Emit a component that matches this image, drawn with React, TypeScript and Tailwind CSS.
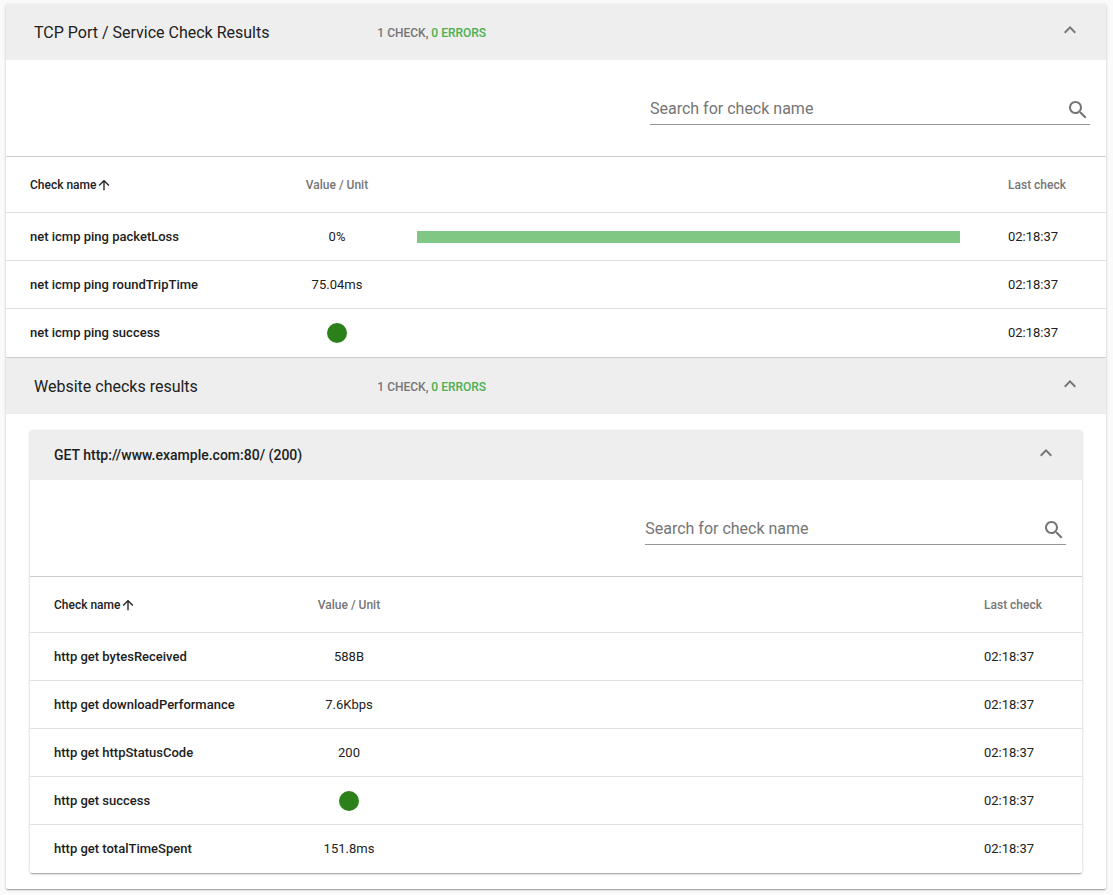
import React, { useState } from 'react';
import clsx from 'clsx';

type CheckRow = {
  name: string;
  value?: string;
  ok?: boolean;
  bar?: number;
  lastCheck: string;
};

const TCP_ROWS: CheckRow[] = [
  { name: 'net icmp ping packetLoss', value: '0%', bar: 100, lastCheck: '02:18:37' },
  { name: 'net icmp ping roundTripTime', value: '75.04ms', lastCheck: '02:18:37' },
  { name: 'net icmp ping success', ok: true, lastCheck: '02:18:37' },
];

const HTTP_ROWS: CheckRow[] = [
  { name: 'http get bytesReceived', value: '588B', lastCheck: '02:18:37' },
  { name: 'http get downloadPerformance', value: '7.6Kbps', lastCheck: '02:18:37' },
  { name: 'http get httpStatusCode', value: '200', lastCheck: '02:18:37' },
  { name: 'http get success', ok: true, lastCheck: '02:18:37' },
  { name: 'http get totalTimeSpent', value: '151.8ms', lastCheck: '02:18:37' },
];

const CARD =
  'rounded-xs bg-white shadow-[0_1px_3px_rgba(0,0,0,0.2),0_1px_1px_rgba(0,0,0,0.14),0_2px_1px_-1px_rgba(0,0,0,0.12)]';

const ChevronIcon: React.FC<{ open: boolean }> = ({ open }) => (
  <svg viewBox="0 0 24 24" className={clsx('size-6 fill-[#757575]', !open && 'rotate-180')} aria-hidden="true">
    <path d="M12 8l-6 6 1.41 1.41L12 10.83l4.59 4.58L18 14z" />
  </svg>
);

const SearchIcon: React.FC = () => (
  <svg viewBox="0 0 24 24" className="size-6 shrink-0 fill-[#757575]" aria-hidden="true">
    <path d="M15.5 14h-.79l-.28-.27C15.41 12.59 16 11.11 16 9.5 16 5.91 13.09 3 9.5 3S3 5.91 3 9.5 5.91 16 9.5 16c1.61 0 3.09-.59 4.23-1.57l.27.28v.79l5 4.99L20.49 19l-4.99-5zm-6 0C7.01 14 5 11.99 5 9.5S7.01 5 9.5 5 14 7.01 14 9.5 11.99 14 9.5 14z" />
  </svg>
);

const ArrowUpIcon: React.FC<{ asc: boolean }> = ({ asc }) => (
  <svg viewBox="0 0 24 24" className={clsx('size-4 fill-current', !asc && 'rotate-180')} aria-hidden="true">
    <path d="M4 12l1.41 1.41L11 7.83V20h2V7.83l5.58 5.59L20 12l-8-8-8 8z" />
  </svg>
);

const CheckTable: React.FC<{ rows: CheckRow[] }> = ({ rows }) => {
  const [query, setQuery] = useState('');
  const [asc, setAsc] = useState(true);

  const visible = rows
    .filter((r) => r.name.toLowerCase().includes(query.toLowerCase()))
    .sort((a, b) => (asc ? 1 : -1) * a.name.localeCompare(b.name));

  return (
    <>
      <div className="pt-8 pb-[31px]">
        <div className="mr-4 ml-auto flex h-[33px] w-2/5 items-center border-b border-[#949494] pt-1">
          <input
            type="text"
            aria-label="Search for check name"
            value={query}
            onChange={(e) => setQuery(e.target.value)}
            placeholder="Search for check name"
            className="min-w-0 flex-1 bg-transparent pb-0.5 text-base text-[#212121] outline-none placeholder:text-[#757575]"
          />
          <SearchIcon />
        </div>
      </div>

      <div className="border-t border-[#cccccc]">
        <table className="w-full table-fixed border-separate border-spacing-0 text-left text-[13px] leading-4">
          <colgroup>
            <col className="w-1/4" />
            <col className="w-28" />
            <col />
            <col className="w-[122px]" />
          </colgroup>
          <thead>
            <tr className="h-14 text-xs text-[#757575] *:border-b *:border-[#e0e0e0]">
              <th scope="col" className="pl-6 font-medium text-[#212121]">
                <button type="button" onClick={() => setAsc(!asc)} className="flex items-center">
                  Check name
                  <ArrowUpIcon asc={asc} />
                </button>
              </th>
              <th scope="col" className="text-center font-medium">Value / Unit</th>
              <td></td>
              <th scope="col" className="pl-6 font-medium">Last check</th>
            </tr>
          </thead>
          <tbody>
            {visible.map((row) => (
              <tr key={row.name} className="h-12 *:border-b *:border-[#e0e0e0] last:*:border-b-0">
                <th scope="row" className="pl-6 font-medium whitespace-nowrap">{row.name}</th>
                <td className="text-center">
                  {row.ok ? (
                    <span role="img" aria-label="OK" className="mx-auto block size-5 rounded-full bg-[#2b801a]" />
                  ) : (
                    row.value
                  )}
                </td>
                <td className="px-6">
                  {row.bar !== undefined && (
                    <div className="h-3 bg-[#81c784]" style={{ width: `${row.bar}%` }} />
                  )}
                </td>
                <td className="pl-6">{row.lastCheck}</td>
              </tr>
            ))}
          </tbody>
        </table>
      </div>
    </>
  );
};

const Section: React.FC<{ title: string; children: React.ReactNode }> = ({ title, children }) => {
  const [open, setOpen] = useState(true);

  return (
    <section>
      <button
        type="button"
        aria-expanded={open}
        onClick={() => setOpen(!open)}
        className="flex h-14 w-full items-center bg-[#eeeeee] pr-6 pl-7 text-left"
      >
        <span className="flex flex-1 items-center pt-0.5">
          <span className="w-1/3 text-base">{title}</span>
          <span className="pl-0.5 text-xs font-medium text-[#757575] uppercase">
            1 check, <span className="text-[#4caf50]">0 errors</span>
          </span>
        </span>
        <span className="pb-1">
          <ChevronIcon open={open} />
        </span>
      </button>
      {open && children}
    </section>
  );
};

const RequestCard: React.FC<{ title: string; rows: CheckRow[] }> = ({ title, rows }) => {
  const [open, setOpen] = useState(true);

  return (
    <div className={CARD}>
      <button
        type="button"
        aria-expanded={open}
        onClick={() => setOpen(!open)}
        className="flex h-[50px] w-full items-center justify-between rounded-t-xs bg-[#eeeeee] px-6 text-left text-sm font-medium"
      >
        {title}
        <span className="pb-1">
          <ChevronIcon open={open} />
        </span>
      </button>
      {open && <CheckTable rows={rows} />}
    </div>
  );
};

export default function App() {
  return (
    <main className="min-h-screen bg-[#fafafa] pt-1 pr-[7px] pb-1.5 pl-1.5 font-['Roboto',sans-serif] text-[#212121]">
      <div className={clsx(CARD, 'divide-y divide-[#cccccc]')}>
        <Section title="TCP Port / Service Check Results">
          <CheckTable rows={TCP_ROWS} />
        </Section>
        <Section title="Website checks results">
          <div className="px-6 py-4">
            <RequestCard title="GET http://www.example.com:80/ (200)" rows={HTTP_ROWS} />
          </div>
        </Section>
      </div>
    </main>
  );
}
